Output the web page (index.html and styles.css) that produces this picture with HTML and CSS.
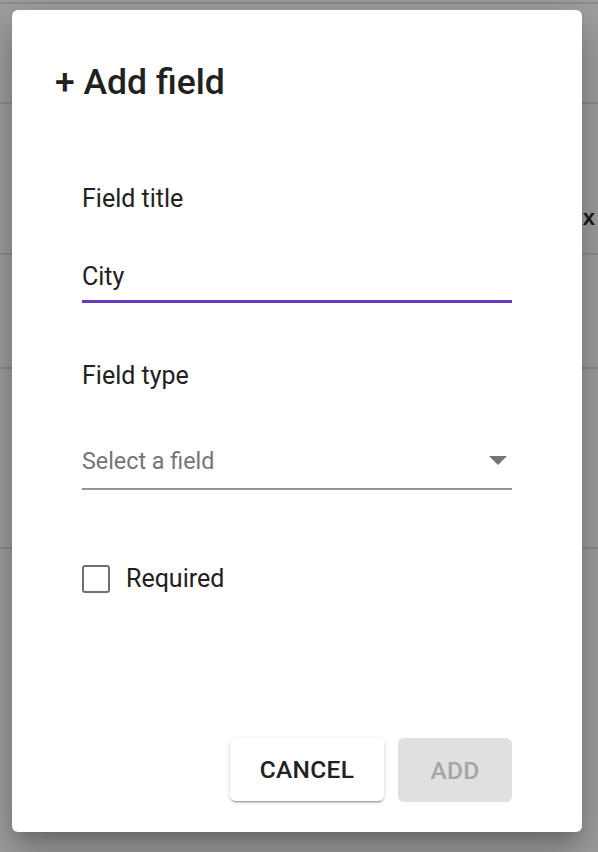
FILE: index.html
```html
<!DOCTYPE html>
<html lang="en">
<head>
<meta charset="utf-8">
<title>Add field</title>
<link rel="stylesheet" href="styles.css">
</head>
<body>
<div class="backdrop">
  <div class="bg-row bg-row-0"></div>
  <div class="bg-row bg-row-1"></div>
  <div class="bg-row bg-row-2"><span class="bg-x">x</span></div>
  <div class="bg-row bg-row-3"></div>
  <div class="bg-row bg-row-4"></div>
</div>

<div class="dialog" role="dialog" aria-labelledby="dlg-title">
  <h2 class="dialog-title" id="dlg-title">+ Add field</h2>

  <div class="field">
    <label class="field-label" for="title-input">Field title</label>
    <div class="input focused" id="title-input">City</div>
  </div>

  <div class="field field-type">
    <div class="field-label">Field type</div>
    <div class="select">
      <span class="placeholder">Select a field</span>
      <svg class="arrow" width="18" height="9" viewBox="0 0 18 9" aria-hidden="true"><path d="M0 0 L18 0 L9 9 Z" fill="#757575"/></svg>
    </div>
  </div>

  <div class="checkbox-row">
    <span class="checkbox"></span>
    <span class="checkbox-label">Required</span>
  </div>

  <div class="actions">
    <button class="btn btn-cancel">CANCEL</button>
    <button class="btn btn-add" disabled>ADD</button>
  </div>
</div>
</body>
</html>
```

FILE: styles.css
```css
html, body {
  margin: 0;
  padding: 0;
}
body {
  width: 598px;
  height: 852px;
  overflow: hidden;
  background: #a0a0a0;
  font-family: Roboto, "Liberation Sans", sans-serif;
  position: relative;
}

.backdrop {
  display: flex;
  flex-direction: column;
}
.bg-row {
  box-sizing: border-box;
  border-bottom: 2px solid #8e8e8e;
}
.bg-row-0 { height: 4px; }
.bg-row-1 { height: 100px; }
.bg-row-2 {
  height: 151px;
  display: flex;
  justify-content: flex-end;
  align-items: flex-start;
}
.bg-row-3 { height: 114px; }
.bg-row-4 { height: 180px; }
.bg-x {
  margin-top: 102px;
  margin-right: 3px;
  font-family: "Liberation Sans", Arial, sans-serif;
  font-weight: 700;
  font-size: 22px;
  line-height: 24px;
  color: #1a1a1a;
}

.dialog {
  position: absolute;
  left: 12px;
  top: 10px;
  width: 570px;
  box-sizing: border-box;
  padding: 52px 70px 30px;
  background: #fff;
  border-radius: 6px;
  box-shadow: 0 11px 15px -7px rgba(0,0,0,.2),
              0 24px 38px 3px rgba(0,0,0,.14),
              0 9px 46px 8px rgba(0,0,0,.12);
  color: #212121;
}

.dialog-title {
  margin: 0 0 0 -27px;
  font-size: 35.5px;
  line-height: 40px;
  font-weight: 500;
  color: #212121;
}

.field {
  margin-top: 83px;
}
.field-label {
  display: block;
  font-size: 25px;
  line-height: 28px;
  color: #212121;
}
.input {
  margin-top: 50px;
  font-size: 25px;
  line-height: 28px;
  padding-bottom: 9px;
  border-bottom: 3px solid #673ab7;
  color: #212121;
}

.field-type {
  margin-top: 59px;
}
.select {
  margin-top: 55px;
  display: flex;
  align-items: center;
  justify-content: space-between;
  padding-bottom: 13px;
  border-bottom: 2px solid #969696;
}
.placeholder {
  font-size: 23.3px;
  line-height: 28px;
  color: #757575;
  padding-top: 2px;
}
.arrow {
  margin-right: 5px;
  display: block;
}

.checkbox-row {
  margin-top: 75px;
  display: flex;
  align-items: center;
  gap: 16px;
}
.checkbox {
  width: 28px;
  height: 28px;
  box-sizing: border-box;
  border: 2px solid #6f6f6f;
  border-radius: 3px;
}
.checkbox-label {
  font-size: 25px;
  line-height: 28px;
  color: #212121;
}

.actions {
  margin-top: 145px;
  display: flex;
  justify-content: flex-end;
  gap: 14px;
}
.btn {
  height: 63px;
  border: none;
  border-radius: 6px;
  font-family: Roboto, "Liberation Sans", sans-serif;
  font-size: 24.5px;
  font-weight: 500;
  letter-spacing: 0.3px;
  padding: 0;
}
.btn-cancel {
  width: 154px;
  background: #fff;
  color: #212121;
  box-shadow: 0 3px 1px -2px rgba(0,0,0,.2),
              0 2px 2px 0 rgba(0,0,0,.14),
              0 1px 5px 0 rgba(0,0,0,.12);
}
.btn-add {
  width: 114px;
  height: 64px;
  background: #e0e0e0;
  color: #a6a6a6;
}
```
